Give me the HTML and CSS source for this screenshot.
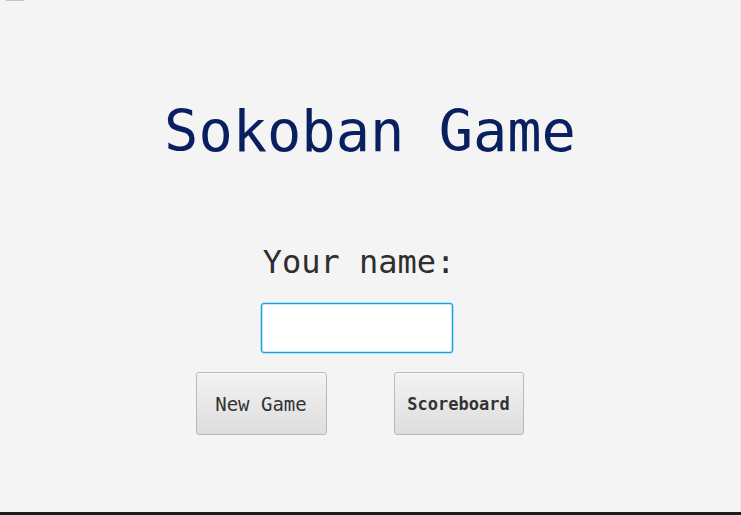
FILE: index.html
```html
<!DOCTYPE html>
<html lang="en">
<head>
<meta charset="utf-8">
<title>Sokoban Game</title>
<link rel="stylesheet" href="styles.css">
</head>
<body>
<div class="window">
  <span class="corner-mark"></span>
  <main class="screen">
    <h1 class="title">Sokoban Game</h1>
    <label class="name-label" for="player">Your name:</label>
    <input class="name-input" id="player" type="text">
    <div class="actions">
      <button class="btn btn-new">New Game</button>
      <button class="btn btn-score">Scoreboard</button>
    </div>
  </main>
  <div class="bottom-bar"></div>
</div>
</body>
</html>
```

FILE: styles.css
```css
html, body {
  margin: 0;
  padding: 0;
}
body {
  background: #f4f4f4;
  font-family: "DejaVu Sans Mono", "Liberation Mono", monospace;
}
.window {
  position: relative;
  width: 741px;
  height: 515px;
  display: flex;
  flex-direction: column;
  background: #f4f4f4;
  overflow: hidden;
}
.corner-mark {
  position: absolute;
  left: 6px;
  top: 0;
  width: 18px;
  height: 1px;
  background: #c4c4c4;
}
.screen {
  flex: 1;
  display: flex;
  flex-direction: column;
  align-items: center;
  border-right: 1px solid #e6e6e6;
}
.title {
  margin: 103px 0 0 0;
  font-size: 57px;
  line-height: 57px;
  font-weight: normal;
  color: #0a1f60;
  white-space: nowrap;
}
.name-label {
  margin: 86px 22px 0 0;
  font-size: 32px;
  line-height: 32px;
  color: #2e2e2e;
  white-space: nowrap;
}
.name-input {
  box-sizing: border-box;
  margin: 25px 27px 0 0;
  width: 192px;
  height: 50px;
  border: 1px solid #1b9fdc;
  border-radius: 3px;
  box-shadow: inset 0 0 0 1px #c4e6f7, 0 0 0 0.5px #7fcaee;
  background: #ffffff;
  outline: none;
  padding: 0 8px;
}
.actions {
  margin: 19px 21px 0 0;
  display: flex;
  gap: 67px;
}
.btn {
  box-sizing: border-box;
  height: 63px;
  border: 1px solid #b9b9b9;
  border-radius: 3px;
  background: linear-gradient(#f3f3f3, #dddddd);
  box-shadow: inset 0 1px 0 #fafafa;
  color: #333333;
  font-family: "DejaVu Sans Mono", "Liberation Mono", monospace;
  padding: 0;
  cursor: pointer;
}
.btn-new {
  width: 131px;
  font-size: 19px;
  font-weight: normal;
}
.btn-score {
  width: 130px;
  font-size: 17px;
  font-weight: bold;
}
.bottom-bar {
  height: 3px;
  background: #1c1c1c;
}
```
